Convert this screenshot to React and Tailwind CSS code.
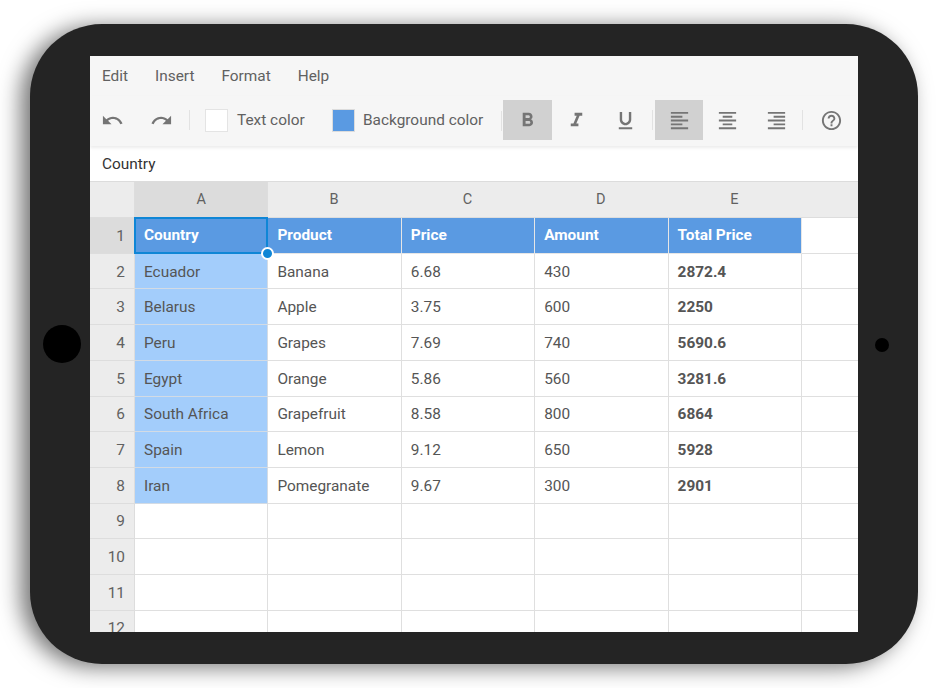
import { Fragment } from 'react';

const rows = [
  ['Ecuador', 'Banana', '6.68', '430', '2872.4'],
  ['Belarus', 'Apple', '3.75', '600', '2250'],
  ['Peru', 'Grapes', '7.69', '740', '5690.6'],
  ['Egypt', 'Orange', '5.86', '560', '3281.6'],
  ['South Africa', 'Grapefruit', '8.58', '800', '6864'],
  ['Spain', 'Lemon', '9.12', '650', '5928'],
  ['Iran', 'Pomegranate', '9.67', '300', '2901'],
  ['', '', '', '', ''],
  ['', '', '', '', ''],
  ['', '', '', '', ''],
  ['', '', '', '', ''],
];

const headers = ['Country', 'Product', 'Price', 'Amount', 'Total Price'];

const icons = {
  undo: 'M12.5 8c-2.65 0-5.05.99-6.9 2.6L2 7v9h9l-3.62-3.62c1.39-1.16 3.16-1.88 5.12-1.88 3.54 0 6.55 2.31 7.6 5.5l2.37-.78C21.08 11.03 17.15 8 12.5 8z',
  redo: 'M18.4 10.6C16.55 8.99 14.15 8 11.5 8c-4.65 0-8.58 3.03-9.96 7.22L3.9 16c1.05-3.19 4.05-5.5 7.6-5.5 1.95 0 3.73.72 5.12 1.88L13 16h9V7l-3.6 3.6z',
  bold: 'M15.6 10.79c.97-.67 1.65-1.77 1.65-2.79 0-2.26-1.75-4-4-4H7v14h7.04c2.09 0 3.71-1.7 3.71-3.79 0-1.52-.86-2.82-2.15-3.42zM10 6.5h3c.83 0 1.5.67 1.5 1.5s-.67 1.5-1.5 1.5h-3v-3zm3.5 9H10v-3h3.5c.83 0 1.5.67 1.5 1.5s-.67 1.5-1.5 1.5z',
  italic: 'M10 4v3h2.21l-3.42 8H6v3h8v-3h-2.21l3.42-8H18V4z',
  underline: 'M12 17c3.31 0 6-2.69 6-6V3h-2.5v8c0 1.93-1.57 3.5-3.5 3.5S8.5 12.93 8.5 11V3H6v8c0 3.31 2.69 6 6 6zm-7 2v2h14v-2H5z',
  left: 'M15 15H3v2h12v-2zm0-8H3v2h12V7zM3 13h18v-2H3v2zm0 8h18v-2H3v2zM3 3v2h18V3H3z',
  center: 'M7 15v2h10v-2H7zm-4 6h18v-2H3v2zm0-8h18v-2H3v2zm4-6v2h10V7H7zM3 3v2h18V3H3z',
  right: 'M3 21h18v-2H3v2zm6-4h12v-2H9v2zm-6-4h18v-2H3v2zm6-4h12V7H9v2zM3 3v2h18V3H3z',
  help: 'M11 18h2v-2h-2v2zm1-16C6.48 2 2 6.48 2 12s4.48 10 10 10 10-4.48 10-10S17.52 2 12 2zm0 18c-4.41 0-8-3.59-8-8s3.59-8 8-8 8 3.59 8 8-3.59 8-8 8zm0-14c-2.21 0-4 1.79-4 4h2c0-1.1.9-2 2-2s2 .9 2 2c0 2-3 1.75-3 5h2c0-2.25 3-2.5 3-5 0-2.21-1.79-4-4-4z',
};

function Icon({ name }) {
  return (
    <svg viewBox="0 0 24 24" className="w-[23px] h-[23px] fill-[#757575]">
      <path d={icons[name]} />
    </svg>
  );
}

function ToolButton({ name, active }) {
  return (
    <div className={`w-[49px] h-10 flex items-center justify-center ${active ? 'bg-[#d1d1d1]' : ''}`}>
      <Icon name={name} />
    </div>
  );
}

function Divider() {
  return <div className="w-px h-5 bg-[#e2e2e2] mx-px" />;
}

function Toolbar() {
  return (
    <div className="h-[50px] flex items-start pt-1 pl-px text-[#616161] relative z-10 shadow-[0_2px_3px_rgba(0,0,0,0.08)]">
      <div className="flex -ml-[3px] mr-[2px]">
        <ToolButton name="undo" />
        <ToolButton name="redo" />
      </div>
      <div className="h-10 flex items-center"><Divider /></div>
      <div className="h-10 flex items-center ml-[14px] pt-px">
        <div className="w-[23px] h-[23px] bg-white border border-[#e4e4e4]" />
        <span className="ml-[9px] w-[95px] pt-px">Text color</span>
        <div className="w-[23px] h-[23px] bg-[#5a9ae2] border border-[#dcdcdc]" />
        <span className="ml-[8px] w-[137px] pt-px">Background color</span>
        <Divider />
      </div>
      <ToolButton name="bold" active />
      <ToolButton name="italic" />
      <ToolButton name="underline" />
      <div className="h-10 flex items-center mx-px"><Divider /></div>
      <ToolButton name="left" active />
      <ToolButton name="center" />
      <ToolButton name="right" />
      <div className="h-10 flex items-center"><Divider /></div>
      <div className="w-[54px] h-10 flex items-center justify-center"><Icon name="help" /></div>
    </div>
  );
}

function RowNumber({ n, active }) {
  return (
    <div className={`flex items-center justify-end pr-[9px] pt-[2px] border-r border-b border-[#dddddd] text-[#616161] ${active ? 'bg-[#dcdcdc]' : 'bg-[#ececec]'}`}>
      {n}
    </div>
  );
}

function Sheet() {
  return (
    <div className="relative grid grid-cols-[45px_repeat(5,133.4px)_1fr] auto-rows-[35.7px] border-t border-[#dcdcdc] -mt-px">
      {/* column headers */}
      <div className="bg-[#ececec] border-r border-b border-[#dddddd]" />
      {['A', 'B', 'C', 'D', 'E'].map((c, i) => (
        <div key={c} className={`flex items-center justify-center pt-px border-b border-[#dddddd] text-[#616161] text-[14.5px] ${i === 0 ? 'bg-[#dcdcdc] border-r' : 'bg-[#ececec] pr-[2px]'}`}>
          {c}
        </div>
      ))}
      <div className="bg-[#ececec] border-b border-[#dddddd]" />

      {/* title row */}
      <RowNumber n={1} active />
      {headers.map((h, i) => (
        <div key={h} className={`flex items-center pl-[9px] pt-px bg-[#5a9ae2] text-white font-bold border-r border-b ${i === 0 ? 'border-[#5a9ae2]' : 'border-[#e6e6e6]'}`}>
          {h}
        </div>
      ))}
      <div className="bg-white border-b border-[#dfdfdf]" />

      {rows.map((row, r) => (
        <Fragment key={r}>
          <RowNumber n={r + 2} />
          {row.map((v, i) => (
            <div
              key={i}
              className={`flex items-center pl-[9px] pt-[2px] border-r border-b text-[#555] ${i === 0 && v ? 'bg-[#a3cdfb] border-[#d3dbe4]' : 'bg-white border-[#dfdfdf]'} ${i === 4 ? 'font-bold' : ''}`}
            >
              {v}
            </div>
          ))}
          <div className="bg-white border-b border-[#dfdfdf]" />
        </Fragment>
      ))}

      {/* selected cell outline and fill handle */}
      <div className="absolute left-[44px] top-[35px] w-[134px] h-[37px] border-2 border-[#0f86d6] pointer-events-none" />
      <div className="absolute left-[171px] top-[65px] w-[13px] h-[13px] rounded-full bg-[#0f86d6] border-2 border-white" />
    </div>
  );
}

export default function App() {
  return (
    <div className="w-[936px] h-[688px] bg-white pt-6 pl-[30px] font-['Roboto',sans-serif] text-[15.4px]">
      <div className="w-[888px] h-[640px] bg-[#242424] rounded-[72px] relative flex items-center justify-center shadow-[-9px_3px_22px_rgba(0,0,0,0.55)]">
        <div className="absolute left-[13px] top-[301px] w-[38px] h-[38px] rounded-full bg-black" />
        <div className="absolute left-[845px] top-[314px] w-[14px] h-[14px] rounded-full bg-black" />
        <div className="w-[768px] h-[576px] bg-white overflow-hidden">
          <div className="bg-[#f6f6f6]">
            <div className="h-10 flex items-center gap-[27px] pl-3 pt-px text-[#616161]">
              <span>Edit</span>
              <span>Insert</span>
              <span>Format</span>
              <span>Help</span>
            </div>
            <Toolbar />
          </div>
          <div className="h-[36.4px] flex items-center pl-3 pt-px text-[#333] bg-white">Country</div>
          <Sheet />
        </div>
      </div>
    </div>
  );
}
